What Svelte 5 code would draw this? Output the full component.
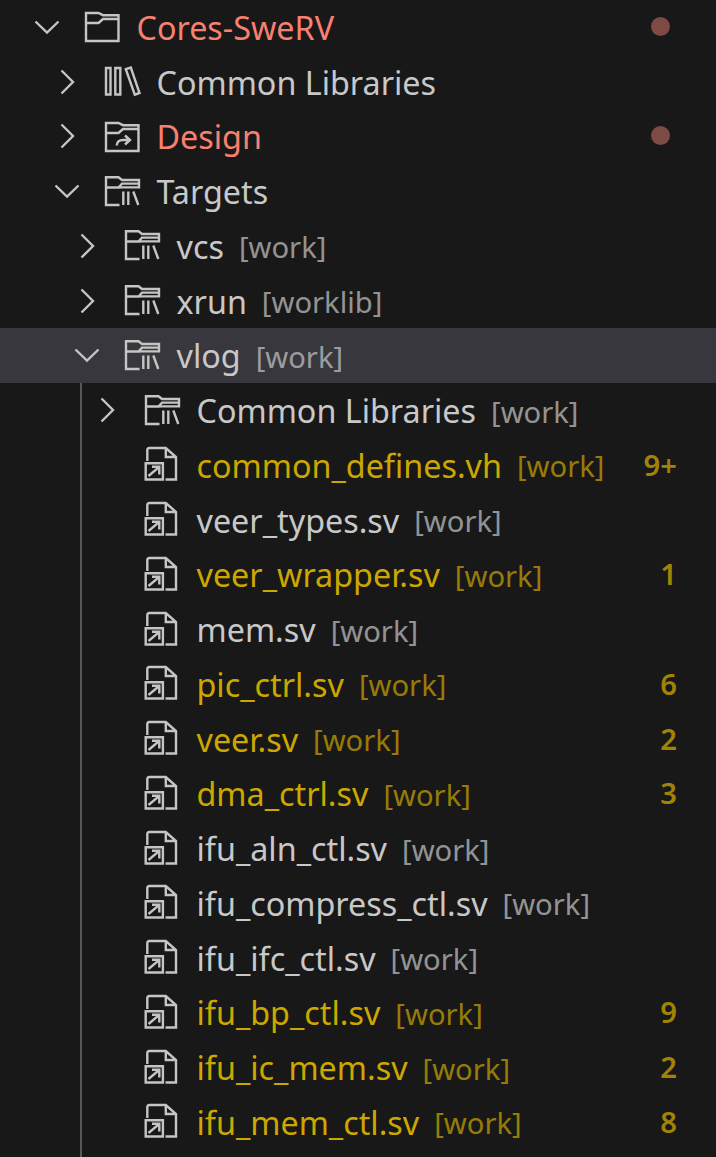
<script>
  const rows = [
    { d: 0, tw: 'down', icon: 'folder', label: 'Cores-SweRV', tone: 'red', dot: true },
    { d: 1, tw: 'right', icon: 'books', label: 'Common Libraries' },
    { d: 1, tw: 'right', icon: 'link', label: 'Design', tone: 'red', dot: true },
    { d: 1, tw: 'down', icon: 'lib', label: 'Targets' },
    { d: 2, tw: 'right', icon: 'lib', label: 'vcs', desc: '[work]' },
    { d: 2, tw: 'right', icon: 'lib', label: 'xrun', desc: '[worklib]' },
    { d: 2, tw: 'down', icon: 'lib', label: 'vlog', desc: '[work]', selected: true },
    { d: 3, tw: 'right', icon: 'lib', label: 'Common Libraries', desc: '[work]' },
    { d: 3, icon: 'file', label: 'common_defines.vh', desc: '[work]', tone: 'yellow', badge: '9+' },
    { d: 3, icon: 'file', label: 'veer_types.sv', desc: '[work]' },
    { d: 3, icon: 'file', label: 'veer_wrapper.sv', desc: '[work]', tone: 'yellow', badge: '1' },
    { d: 3, icon: 'file', label: 'mem.sv', desc: '[work]' },
    { d: 3, icon: 'file', label: 'pic_ctrl.sv', desc: '[work]', tone: 'yellow', badge: '6' },
    { d: 3, icon: 'file', label: 'veer.sv', desc: '[work]', tone: 'yellow', badge: '2' },
    { d: 3, icon: 'file', label: 'dma_ctrl.sv', desc: '[work]', tone: 'yellow', badge: '3' },
    { d: 3, icon: 'file', label: 'ifu_aln_ctl.sv', desc: '[work]' },
    { d: 3, icon: 'file', label: 'ifu_compress_ctl.sv', desc: '[work]' },
    { d: 3, icon: 'file', label: 'ifu_ifc_ctl.sv', desc: '[work]' },
    { d: 3, icon: 'file', label: 'ifu_bp_ctl.sv', desc: '[work]', tone: 'yellow', badge: '9' },
    { d: 3, icon: 'file', label: 'ifu_ic_mem.sv', desc: '[work]', tone: 'yellow', badge: '2' },
    { d: 3, icon: 'file', label: 'ifu_mem_ctl.sv', desc: '[work]', tone: 'yellow', badge: '8' }
  ];
</script>

{#snippet glyph(kind)}
  <svg class="icon" viewBox="0 0 36 36" aria-hidden="true">
    {#if kind === 'folder'}
      <path d="M2 32V4h12.500L19 6.200h15.500V32Z M2 14h12.500L19 10h15.500" />
    {:else if kind === 'books'}
      <path d="M2 4h4.500v26.500H2Z M11.300 4h5v26.500h-5Z M21.800 5.200 26.800 3.500 35.500 29 30.800 30.700Z" />
    {:else if kind === 'link'}
      <path d="M2 32V4h12.500L19 6.200h15.500V32Z M2 14h12.500L19 10h15.500" />
      <path d="M12.700 26.500C13 22.500 16 21 19 21h7M21 16.500 26 21l-5 4.500" />
    {:else if kind === 'lib'}
      <path d="M15.500 31H2V3.200h12.500L18 6h17v7.400H18l-3.500.1H2M14.500 13.500 18 9.600h17M19.300 17.500V31M24.300 17.500V31M29.300 17.500 34.300 31" />
    {:else if kind === 'file'}
      <path d="M3.300 14V3Q3.300 1 5.300 1h16.500L32 10V32.500H21.500M21.800 1v9H32" />
      <path d="M1.700 16.200h17.200v16.300H1.700Z M4.500 29 15.300 19.800M8 19.800h7.300V27.500" />
    {/if}
  </svg>
{/snippet}

<div class="tree">
  <div class="guide"></div>
  {#each rows as r}
    <div class="row" class:selected={r.selected} style="padding-left: {20 * r.d}px">
      <span class="twistie">
        {#if r.tw === 'down'}
          <svg viewBox="0 0 26 14"><path d="M1.500 1.500 13 12.500 24.500 1.500" /></svg>
        {:else if r.tw === 'right'}
          <svg class="right" viewBox="0 0 14 26"><path d="M1.500 1.500 13 13 1.500 24.500" /></svg>
        {/if}
      </span>
      {@render glyph(r.icon)}
      <span class="label {r.tone ?? ''}">{r.label}</span>
      {#if r.desc}<span class="desc {r.tone ?? ''}">{r.desc}</span>{/if}
      {#if r.badge}<span class="badge">{r.badge}</span>{/if}
      {#if r.dot}<span class="dot"></span>{/if}
    </div>
  {/each}
</div>

<style>
  :global(body) {
    margin: 0;
    background: #181818;
  }
  .tree {
    position: relative;
    width: 716px;
    height: 1157px;
    overflow: hidden;
    background: #181818;
    font-family: "Noto Sans", sans-serif;
    font-size: 32.300px;
    color: #c8c8c8;
  }
  .guide {
    position: absolute;
    left: 80px;
    top: 383px;
    bottom: 0;
    width: 2px;
    background: #585858;
  }
  .row {
    position: relative;
    top: -0.4px;
    display: flex;
    align-items: center;
    height: 54.750px;
    box-sizing: border-box;
    white-space: nowrap;
  }
  .selected {
    background: #37373d;
  }
  .twistie {
    flex: none;
    display: flex;
    justify-content: center;
    width: 94px;
  }
  .twistie svg {
    width: 26px;
    height: 14px;
    overflow: visible;
  }
  .twistie svg.right {
    width: 14px;
    height: 26px;
  }
  path {
    fill: none;
    stroke: #c5c5c5;
    stroke-width: 2.400;
  }
  .icon {
    flex: none;
    width: 36px;
    height: 36px;
    margin-left: -10px;
    margin-top: 1px;
    overflow: visible;
  }
  .label {
    margin-left: 16.500px;
    opacity: 0.999;
  }
  .desc {
    margin-left: 15px;
    margin-top: 3px;
    font-size: 29.200px;
    opacity: 0.7;
  }
  .red {
    color: #f88070;
  }
  .yellow {
    color: #cca700;
  }
  .badge {
    position: absolute;
    right: 39px;
    font-size: 29.200px;
    font-weight: 600;
    color: #cca700;
    opacity: 0.76;
  }
  .dot {
    position: absolute;
    left: 650.500px;
    top: 17px;
    width: 19px;
    height: 19px;
    border-radius: 50%;
    background: #7d4a44;
  }
</style>
